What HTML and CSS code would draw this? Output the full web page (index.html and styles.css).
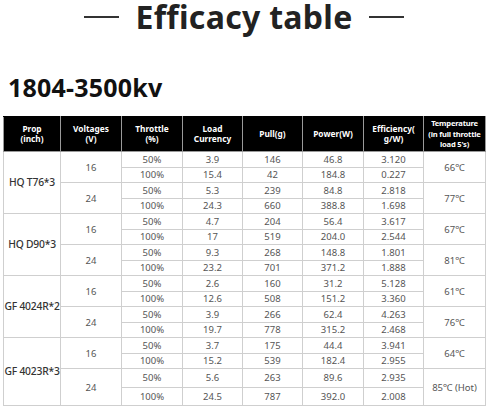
FILE: index.html
```html
<!DOCTYPE html>
<html lang="en">

<head>
  <meta charset='utf-8'>
  <title>Efficacy table</title>
  <link rel="stylesheet" href="styles.css">
</head>

<body>
  <div class='page'>
    <div class='title'>
      <span class='dash'></span>
      <h1>Efficacy table</h1>
      <span class='dash'></span>
    </div>
    <h2 class='kv'>1804-3500kv</h2>

    <table class='eff'>
      <colgroup>
        <col style='width:57px'>
        <col style='width:61px'>
        <col style='width:61px'>
        <col style='width:60px'>
        <col style='width:60px'>
        <col style='width:61px'>
        <col style='width:60px'>
        <col style='width:62px'>
      </colgroup>
      <thead>
        <tr>
          <th>Prop<br>(inch)</th>
          <th>Voltages<br>(V)</th>
          <th>Throttle<br>(%)</th>
          <th>Load<br>Currency</th>
          <th>Pull(g)</th>
          <th>Power(W)</th>
          <th>Efficiency(<br>g/W)</th>
          <th class='temp'>Temperature<br>(in full throttle<br>load 5's)</th>
        </tr>
      </thead>
      <tbody>
        <!-- HQ T76*3 -->
        <tr>
          <td class='prop' rowspan='4'>HQ T76*3</td>
          <td rowspan='2'>16</td>
          <td>50%</td><td>3.9</td><td>146</td><td>46.8</td><td>3.120</td>
          <td rowspan='2'>66℃</td>
        </tr>
        <tr>
          <td>100%</td><td>15.4</td><td>42</td><td>184.8</td><td>0.227</td>
        </tr>
        <tr>
          <td rowspan='2'>24</td>
          <td>50%</td><td>5.3</td><td>239</td><td>84.8</td><td>2.818</td>
          <td rowspan='2'>77℃</td>
        </tr>
        <tr>
          <td>100%</td><td>24.3</td><td>660</td><td>388.8</td><td>1.698</td>
        </tr>
        <!-- HQ D90*3 -->
        <tr>
          <td class='prop' rowspan='4'>HQ D90*3</td>
          <td rowspan='2'>16</td>
          <td>50%</td><td>4.7</td><td>204</td><td>56.4</td><td>3.617</td>
          <td rowspan='2'>67℃</td>
        </tr>
        <tr>
          <td>100%</td><td>17</td><td>519</td><td>204.0</td><td>2.544</td>
        </tr>
        <tr>
          <td rowspan='2'>24</td>
          <td>50%</td><td>9.3</td><td>268</td><td>148.8</td><td>1.801</td>
          <td rowspan='2'>81℃</td>
        </tr>
        <tr>
          <td>100%</td><td>23.2</td><td>701</td><td>371.2</td><td>1.888</td>
        </tr>
        <!-- GF 4024R*2 -->
        <tr>
          <td class='prop' rowspan='4'>GF 4024R*2</td>
          <td rowspan='2'>16</td>
          <td>50%</td><td>2.6</td><td>160</td><td>31.2</td><td>5.128</td>
          <td rowspan='2'>61℃</td>
        </tr>
        <tr>
          <td>100%</td><td>12.6</td><td>508</td><td>151.2</td><td>3.360</td>
        </tr>
        <tr>
          <td rowspan='2'>24</td>
          <td>50%</td><td>3.9</td><td>266</td><td>62.4</td><td>4.263</td>
          <td rowspan='2'>76℃</td>
        </tr>
        <tr>
          <td>100%</td><td>19.7</td><td>778</td><td>315.2</td><td>2.468</td>
        </tr>
        <!-- GF 4023R*3 -->
        <tr>
          <td class='prop' rowspan='4'>GF 4023R*3</td>
          <td rowspan='2'>16</td>
          <td>50%</td><td>3.7</td><td>175</td><td>44.4</td><td>3.941</td>
          <td rowspan='2'>64℃</td>
        </tr>
        <tr>
          <td>100%</td><td>15.2</td><td>539</td><td>182.4</td><td>2.955</td>
        </tr>
        <tr class='tall'>
          <td rowspan='2'>24</td>
          <td>50%</td><td>5.6</td><td>263</td><td>89.6</td><td>2.935</td>
          <td rowspan='2'>85℃ (Hot)</td>
        </tr>
        <tr class='tall'>
          <td>100%</td><td>24.5</td><td>787</td><td>392.0</td><td>2.008</td>
        </tr>
      </tbody>
    </table>
  </div>
</body>

</html>
```

FILE: styles.css
```css
* {
  margin: 0;
  padding: 0;
}

body {
  background: #fff;
  font-family: "Noto Sans", "Open Sans", sans-serif;
}

.page {
  width: 488px;
  height: 408px;
  overflow: hidden;
}

.title {
  display: flex;
  justify-content: center;
  align-items: center;
  gap: 16px;
  height: 34px;
}

.title h1 {
  font-size: 32px;
  font-weight: 700;
  line-height: 34px;
  color: #222;
  letter-spacing: 0.3px;
}

.dash {
  width: 35px;
  height: 2px;
  background: #333;
}

.kv {
  margin: 38px 0 0 8px;
  font-size: 25px;
  font-weight: 700;
  line-height: 30px;
  color: #111;
  letter-spacing: 0.2px;
}

.eff {
  margin: 14px 0 0 3px;
  width: 482px;
  table-layout: fixed;
  border-collapse: collapse;
  border: 1px solid #b5b5b5;
}

.eff th {
  height: 34px;
  background: #000;
  color: #fff;
  font-size: 8.3px;
  font-weight: 700;
  line-height: 10.5px;
  text-align: center;
  white-space: nowrap;
  border: 1px solid #9a9a9a;
  border-top: 1px solid #000;
}

.eff th.temp {
  font-size: 7.6px;
  letter-spacing: -0.2px;
}

.eff td {
  height: 14.5px;
  font-size: 9.5px;
  line-height: 11px;
  color: #555;
  text-align: center;
  white-space: nowrap;
  border: 1px solid #cfcfcf;
}

.eff tr.tall td {
  height: 17.5px;
}

.eff td.prop {
  font-size: 10.3px;
  letter-spacing: -0.2px;
  color: #333;
  font-weight: 500;
}
```
